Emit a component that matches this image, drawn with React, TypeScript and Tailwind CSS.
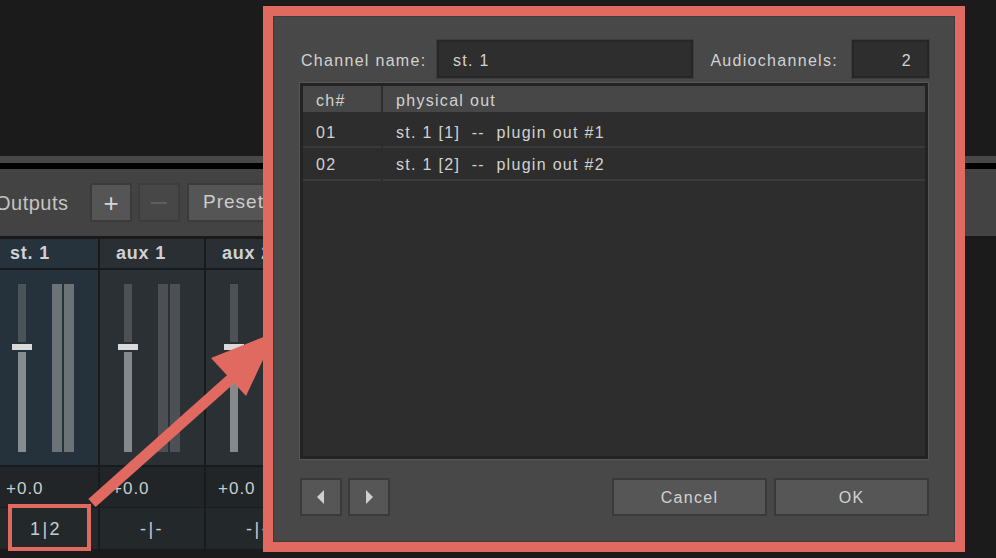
import React from "react";

const strips = [
  { name: "st. 1", active: true, route: "1|2" },
  { name: "aux 1", active: false, route: "-|-" },
  { name: "aux 2", active: false, route: "-|-" },
  { name: "aux 3", active: false, route: "-|-" },
  { name: "aux 4", active: false, route: "-|-" },
];

const Strip = ({ name, active, route }: { name: string; active: boolean; route: string }) => (
  <div className="w-[104px] flex-shrink-0 flex flex-col gap-[2px]">
    <div
      className={`h-[29px] flex items-center pl-[16px] text-[18px] font-bold tracking-[0.8px] text-[#cfd2d4] ${
        active ? "bg-[#26333d]" : "bg-[#2a2f33]"
      }`}
    >
      {name}
    </div>
    <div className={`h-[195px] flex pl-[18px] pt-[14px] ${active ? "bg-[#26323b]" : "bg-[#2b3034]"}`}>
      {/* fader */}
      <div className="w-[20px] h-[168px] flex flex-col items-center">
        <div className={`w-[8px] h-[58px] ${active ? "bg-[#4a5358]" : "bg-[#4c5155]"}`} />
        <div className="w-[20px] h-[6px] my-[2px] bg-[#d9d9d9]" />
        <div className={`w-[8px] flex-1 ${active ? "bg-[#868d91]" : "bg-[#85898c]"}`} />
      </div>
      {/* meters */}
      <div className="ml-[20px] flex gap-[2px]">
        <div className={`w-[10px] h-[168px] ${active ? "bg-[#6b7377]" : "bg-[#4c5054]"}`} />
        <div className={`w-[10px] h-[168px] ${active ? "bg-[#6b7377]" : "bg-[#4c5054]"}`} />
      </div>
    </div>
    <div className="h-[40px] flex items-center pl-[12px] pt-[4px] text-[17px] tracking-[1px] text-[#c9cccd] bg-[#212528]">
      +0.0
    </div>
    <div className="h-[41px] -mt-[1px] flex items-center justify-center pt-[2px] text-[18px] tracking-[2.5px] text-[#c9cccd] bg-[#23282b]">
      {route}
    </div>
  </div>
);

const Arrow = ({ dir }: { dir: "left" | "right" }) => (
  <svg width="10" height="16" viewBox="0 0 10 16">
    {dir === "left" ? (
      <polygon points="8,1 8,15 1,8" fill="#cfcfcf" />
    ) : (
      <polygon points="2,1 2,15 9,8" fill="#cfcfcf" />
    )}
  </svg>
);

export default function App() {
  return (
    <div className="relative w-[996px] h-[558px] overflow-hidden bg-[#1b1b1b] font-['Liberation_Sans',Arial,sans-serif]">
      {/* top empty area */}
      <div className="h-[156px] bg-[#1b1b1b]" />
      <div className="h-[7px] bg-[#484848]" />
      <div className="h-[6px] bg-black" />

      {/* outputs toolbar */}
      <div className="h-[67px] bg-[#434343] flex items-center">
        <span className="-ml-[5px] w-[95px] whitespace-nowrap text-[20px] tracking-[0.5px] text-[#c4c4c4]">Outputs</span>
        <button className="w-[42px] h-[39px] bg-[#555555] border-2 border-[#3b3b3b] flex items-center justify-center text-[26px] leading-none text-[#d6d6d6]">
          +
        </button>
        <button className="ml-[6px] w-[42px] h-[39px] bg-[#474747] border-2 border-[#3d3d3d] flex items-center justify-center">
          <div className="w-[16px] h-[2px] bg-[#5e5e5e]" />
        </button>
        <button className="ml-[7px] w-[120px] h-[39px] bg-[#555555] border-2 border-[#3b3b3b] pl-[14px] text-left text-[19px] tracking-[1px] text-[#cccccc]">
          Presets
        </button>
      </div>
      <div className="h-[3px] bg-[#1a1a1a]" />

      {/* channel strips */}
      <div className="flex gap-[2px] -ml-[6px] w-fit bg-[#181b1d]">
        {strips.map((s) => (
          <Strip key={s.name} {...s} />
        ))}
      </div>

      {/* highlight around 1|2 */}
      <div className="absolute left-[8px] top-[504px] w-[83px] h-[47px] border-4 border-[#e06a60]" />

      {/* callout arrow */}
      <svg className="absolute left-0 top-0 pointer-events-none" width="996" height="558">
        <line x1="92" y1="503" x2="232" y2="378" stroke="#e06a60" strokeWidth="11" />
        <polygon points="276,332 211,358 246,396" fill="#e06a60" />
      </svg>

      {/* output channel dialog */}
      <div className="absolute left-[263px] top-[6px] w-[702px] h-[546px] border-[10px] border-[#e06a60]">
        <div className="h-full border border-[#3d3d3d] bg-[#484848] pl-[25px] pr-[25px] pt-[23px] text-[#d2d2d2] text-[16px] tracking-[1.3px]">
          <div className="h-[38px] flex items-center whitespace-nowrap">
            <span className="w-[138px] pl-[2px] pt-[3px]">Channel name:</span>
            <div className="w-[256px] h-[38px] border-2 border-[#262626] bg-[#2e2e2e] shadow-[0_0_0_1px_#3d3d3d] flex items-center pl-[14px] pt-[3px]">
              st. 1
            </div>
            <div className="flex-1" />
            <span className="pt-[3px]">Audiochannels:</span>
            <div className="ml-[14px] w-[77px] h-[38px] border-2 border-[#262626] bg-[#2e2e2e] shadow-[0_0_0_1px_#3d3d3d] flex items-center justify-end pr-[15px] pt-[3px]">
              2
            </div>
          </div>

          <div className="mt-[4px] h-[378px] border border-[#565656]">
            <div className="h-full border-[3px] border-[#232323] bg-[#2d2d2d]">
              <div className="h-[26px] flex gap-[2px]">
                <div className="w-[78px] bg-[#474747] flex items-center pl-[13px] pt-[3px]">ch#</div>
                <div className="flex-1 bg-[#474747] flex items-center pl-[13px] pt-[3px]">physical out</div>
              </div>
              <div className="mt-[2px] h-[34px] flex gap-[2px]">
                <div className="w-[78px] border-b-2 border-[#3a3a3a] flex items-center pl-[13px] pt-[5px]">01</div>
                <div className="flex-1 border-b-2 border-[#3a3a3a] flex items-center pl-[13px] pt-[5px] whitespace-pre">
                  st. 1 [1]  --  plugin out #1
                </div>
              </div>
              <div className="h-[33px] flex gap-[2px]">
                <div className="w-[78px] border-b-2 border-[#3a3a3a] flex items-center pl-[13px] pt-[3px]">02</div>
                <div className="flex-1 border-b-2 border-[#3a3a3a] flex items-center pl-[13px] pt-[3px] whitespace-pre">
                  st. 1 [2]  --  plugin out #2
                </div>
              </div>
            </div>
          </div>

          <div className="mt-[18px] h-[38px] flex">
            <button className="ml-[1px] w-[42px] h-[38px] bg-[#565656] border-2 border-[#3a3a3a] flex items-center justify-center">
              <Arrow dir="left" />
            </button>
            <button className="ml-[6px] w-[42px] h-[38px] bg-[#565656] border-2 border-[#3a3a3a] flex items-center justify-center">
              <Arrow dir="right" />
            </button>
            <div className="flex-1" />
            <button className="w-[155px] h-[38px] bg-[#565656] border-2 border-[#3a3a3a] pt-[2px] text-[#d2d2d2] tracking-[1.3px]">Cancel</button>
            <button className="ml-[7px] w-[155px] h-[38px] bg-[#565656] border-2 border-[#3a3a3a] pt-[2px] text-[#d2d2d2] tracking-[1.3px]">OK</button>
          </div>
        </div>
      </div>
    </div>
  );
}
